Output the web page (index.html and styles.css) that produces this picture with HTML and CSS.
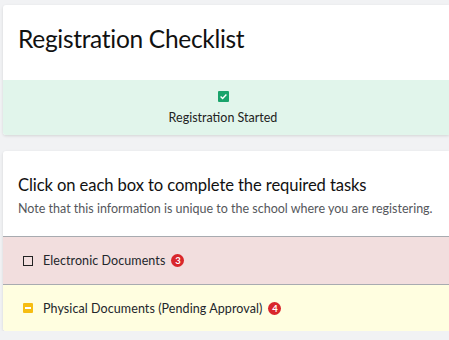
FILE: index.html
```html
<!DOCTYPE html>
<html>
<head>
<meta charset="utf-8">
<link rel="stylesheet" href="styles.css">
</head>
<body>
<div class="page">
  <section class="card">
    <div class="card-head">
      <h1 class="title">Registration Checklist</h1>
    </div>
    <div class="status">
      <span class="check-box">
        <svg width="11" height="11" viewBox="0 0 11 11"><rect width="11" height="11" rx="1" fill="#1aa36b"/><path d="M2.6 5.6 L4.6 7.5 L8.4 3.6" fill="none" stroke="#fff" stroke-width="1.4"/></svg>
      </span>
      <span class="status-text">Registration Started</span>
    </div>
  </section>
  <section class="card tasks">
    <div class="tasks-head">
      <h2 class="subtitle">Click on each box to complete the required tasks</h2>
      <p class="note">Note that this information is unique to the school where you are registering.</p>
    </div>
    <div class="row row-red">
      <span class="box box-empty"></span>
      <span class="row-text">Electronic Documents</span>
      <span class="badge">3</span>
    </div>
    <div class="row row-yellow">
      <span class="box box-pending"><span class="dash"></span></span>
      <span class="row-text">Physical Documents (Pending Approval)</span>
      <span class="badge">4</span>
    </div>
  </section>
</div>
</body>
</html>
```
FILE: styles.css
```css
html, body {
  margin: 0;
  padding: 0;
  background: #f1f2f4;
  font-family: "Lato", "Noto Sans", sans-serif;
  color: #1b1b1f;
}
.page {
  padding: 5px 0 0 3px;
}
.card {
  background: #fff;
  border-radius: 3px 0 0 3px;
  box-shadow: 0 1px 3px rgba(0,0,0,0.12);
  overflow: hidden;
}
.card-head {
  height: 75px;
  padding: 0 0 0 15px;
  display: flex;
  align-items: center;
}
.title {
  margin: 0;
  font-size: 24.5px;
  font-weight: 400;
  letter-spacing: -0.3px;
  color: #111;
  position: relative;
  top: -4px;
}
.status {
  background: #e1f5eb;
  height: 55px;
  display: flex;
  flex-direction: column;
  align-items: center;
  padding: 11px 6px 0 0;
  box-sizing: border-box;
}
.check-box {
  display: block;
  width: 11px;
  height: 11px;
  line-height: 0;
}
.status-text {
  margin-top: 8px;
  font-size: 12.5px;
  color: #222;
}
.tasks {
  margin-top: 16px;
}
.tasks-head {
  padding: 24px 0 0 15px;
  height: 61px;
  border-bottom: 1px solid #a8abb0;
}
.subtitle {
  margin: 0;
  font-size: 16.6px;
  font-weight: 400;
  color: #111;
  letter-spacing: -0.1px;
}
.note {
  margin: 6px 0 0;
  font-size: 12.5px;
  color: #55575c;
}
.row {
  display: flex;
  align-items: center;
  padding-left: 20px;
  height: 47px;
}
.row-red {
  background: #f2dede;
  border-bottom: 1px solid #a8abb0;
}
.row-yellow {
  background: #fffee0;
  height: 46px;
}
.box {
  width: 10px;
  height: 10px;
  box-sizing: border-box;
  margin-right: 10px;
}
.box-empty {
  border: 1.5px solid #222;
}
.box-pending {
  background: #f6bd12;
  display: flex;
  align-items: center;
  justify-content: center;
  border-radius: 1px;
}
.dash {
  width: 6px;
  height: 2px;
  background: #fff;
}
.row-text {
  font-size: 12.5px;
  letter-spacing: 0.08px;
  color: #23262b;
}
.badge {
  margin-left: 6px;
  width: 13px;
  height: 13px;
  border-radius: 50%;
  background: #d9262b;
  color: #fff;
  font-size: 9.5px;
  font-weight: 700;
  display: flex;
  align-items: center;
  justify-content: center;
}
```
